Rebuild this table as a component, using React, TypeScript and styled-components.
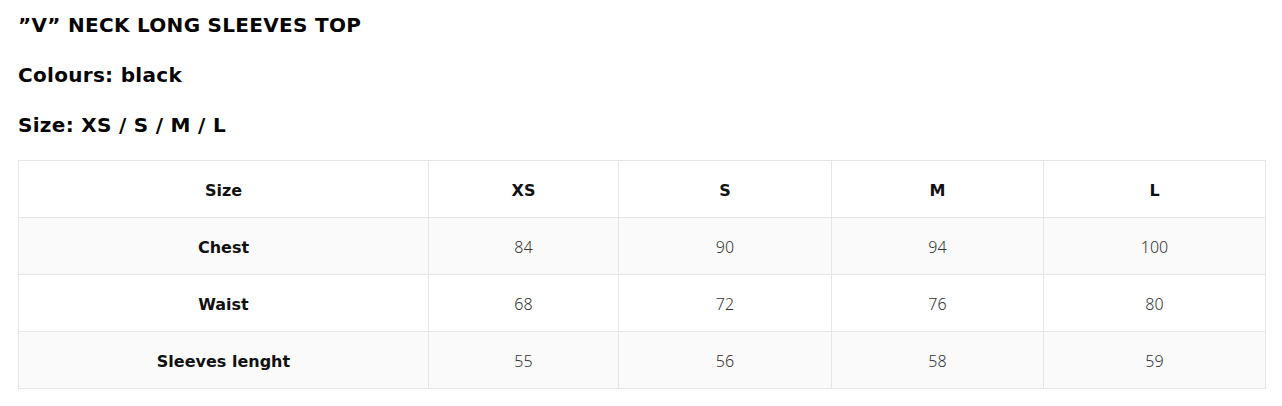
import React from "react";
import styled, { createGlobalStyle } from "styled-components";

const GlobalStyle = createGlobalStyle`
    html, body {
        margin: 0;
        padding: 0;
        background: #ffffff;
    }
    body {
        font-family: "DejaVu Sans", "Noto Sans", sans-serif;
        color: #000000;
    }
`;

const Page = styled.div`
    padding: 13px 17px 0 18px;
`;

const Heading = styled.h3`
    margin: 0 0 26px 0;
    font-size: 20px;
    line-height: 24px;
    font-weight: 700;
    letter-spacing: 0.3px;
    color: #050505;
`;

const Table = styled.table`
    width: 1247px;
    margin-top: -3px;
    border-collapse: collapse;
    table-layout: fixed;
`;

const Row = styled.tr<{ $shade?: boolean }>`
    height: 57px;
    background: ${(p) => (p.$shade ? "#fafafa" : "#ffffff")};
`;

const Cell = styled.td<{ $bold?: boolean }>`
    border: 1px solid #e6e6e6;
    text-align: center;
    vertical-align: middle;
    padding: 2px 8px 0;
    font-size: 16px;
    font-family: ${(p) =>
        p.$bold ? `"DejaVu Sans", sans-serif` : `"Noto Sans", sans-serif`};
    font-weight: ${(p) => (p.$bold ? 700 : 300)};
    color: ${(p) => (p.$bold ? "#111111" : "#333333")};
`;

const widths = [410, 190, 213, 212, 222];

const rows = [
    { label: "Size", values: ["XS", "S", "M", "L"], head: true },
    { label: "Chest", values: ["84", "90", "94", "100"] },
    { label: "Waist", values: ["68", "72", "76", "80"] },
    { label: "Sleeves lenght", values: ["55", "56", "58", "59"] },
];

const App = () => {
    return (
        <Page>
            <GlobalStyle />
            <Heading>”V” NECK LONG SLEEVES TOP</Heading>
            <Heading>Colours: black</Heading>
            <Heading>Size: XS / S / M / L</Heading>
            <Table>
                <colgroup>
                    {widths.map((w, i) => (
                        <col key={i} style={{ width: w }} />
                    ))}
                </colgroup>
                <tbody>
                    {rows.map((r, i) => (
                        <Row key={r.label} $shade={i % 2 === 1}>
                            <Cell $bold>{r.label}</Cell>
                            {r.values.map((v) => (
                                <Cell key={v} $bold={r.head}>
                                    {v}
                                </Cell>
                            ))}
                        </Row>
                    ))}
                </tbody>
            </Table>
        </Page>
    );
};

export default App;
